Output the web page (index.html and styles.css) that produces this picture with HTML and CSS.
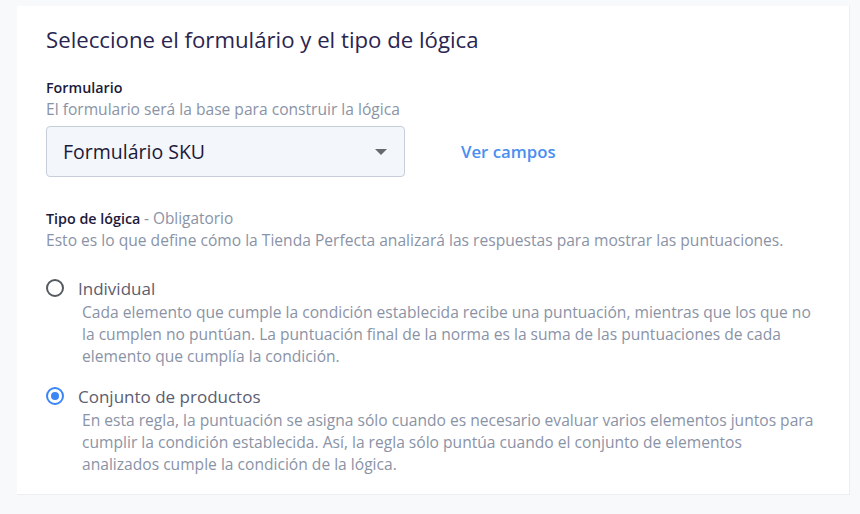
FILE: index.html
```html
<!DOCTYPE html>
<html lang="es">
<head>
<meta charset="utf-8">
<link rel="stylesheet" href="styles.css">
</head>
<body>
<div class="page">
  <section class="card">
    <h2 class="title">Seleccione el formulário y el tipo de lógica</h2>

    <div class="field">
      <div class="label">Formulario</div>
      <div class="hint">El formulario será la base para construir la lógica</div>
      <div class="select-row">
        <div class="select">
          <span class="select-value">Formulário SKU</span>
          <span class="caret"></span>
        </div>
        <a class="link">Ver campos</a>
      </div>
    </div>

    <div class="field logic">
      <div class="label">Tipo de lógica <span class="req">- Obligatorio</span></div>
      <div class="hint">Esto es lo que define cómo la Tienda Perfecta analizará las respuestas para mostrar las puntuaciones.</div>

      <div class="options">
        <div class="option">
          <div class="option-head">
            <span class="radio"></span>
            <span class="option-label">Individual</span>
          </div>
          <p class="option-desc">Cada elemento que cumple la condición establecida recibe una puntuación, mientras que los que no la cumplen no puntúan. La puntuación final de la norma es la suma de las puntuaciones de cada elemento que cumplía la condición.</p>
        </div>
        <div class="option">
          <div class="option-head">
            <span class="radio checked"></span>
            <span class="option-label">Conjunto de productos</span>
          </div>
          <p class="option-desc">En esta regla, la puntuación se asigna sólo cuando es necesario evaluar varios elementos juntos para cumplir la condición establecida. Así, la regla sólo puntúa cuando el conjunto de elementos analizados cumple la condición de la lógica.</p>
        </div>
      </div>
    </div>
  </section>
</div>
</body>
</html>
```

FILE: styles.css
```css
* { box-sizing: border-box; }
html, body {
  margin: 0;
  padding: 0;
  background: #f8f9fb;
  font-family: "Open Sans", "Noto Sans", sans-serif;
}
.page {
  padding: 6px 10px 0 17px;
  height: 514px;
}
.card {
  width: 833px;
  height: 489px;
  background: #ffffff;
  border-right: 1px solid #eceef3;
  border-bottom: 1px solid #eceef3;
  padding: 19px 29px 0 29px;
}
.title {
  margin: 0;
  font-size: 22.2px;
  font-weight: 400;
  color: #2a2550;
  line-height: 30px;
}
.field { margin-top: 23px; }
.label {
  font-size: 14.3px;
  font-weight: 600;
  color: #1c1a3a;
  line-height: 20px;
}
.req { font-weight: 400; color: #8a93a6; font-size: 15.4px; }
.hint {
  font-size: 15.6px;
  color: #8a93a6;
  line-height: 22px;
}
.select-row {
  display: flex;
  align-items: center;
  margin-top: 6px;
}
.select {
  width: 359px;
  height: 51px;
  background: #f3f6fb;
  border: 1px solid #c6ceda;
  border-radius: 4px;
  display: flex;
  align-items: center;
  justify-content: space-between;
  padding: 0 17px 0 16px;
}
.select-value {
  font-size: 19.5px;
  color: #1c1a3a;
}
.caret {
  width: 0;
  height: 0;
  border-left: 6px solid transparent;
  border-right: 6px solid transparent;
  border-top: 6px solid #666a70;
}
.link {
  margin-left: 56px;
  font-size: 16.8px;
  font-weight: 600;
  color: #4a8ff0;
}
.logic { margin-top: 32px; }
.options { margin-top: 25px; }
.option + .option { margin-top: 17px; }
.option-head {
  display: flex;
  align-items: center;
  height: 24px;
}
.radio {
  width: 18px;
  height: 18px;
  border: 2px solid #555a60;
  border-radius: 50%;
  display: flex;
  align-items: center;
  justify-content: center;
}
.radio.checked { border-color: #3b86f5; }
.radio.checked::after {
  content: "";
  width: 8px;
  height: 8px;
  border-radius: 50%;
  background: #3b86f5;
}
.option-label {
  margin-left: 14px;
  font-size: 17px;
  color: #5b5d70;
}
.option-desc {
  margin: 1px 0 0 36px;
  font-size: 15.6px;
  line-height: 22px;
  color: #8a93a6;
  max-width: 740px;
}
```
